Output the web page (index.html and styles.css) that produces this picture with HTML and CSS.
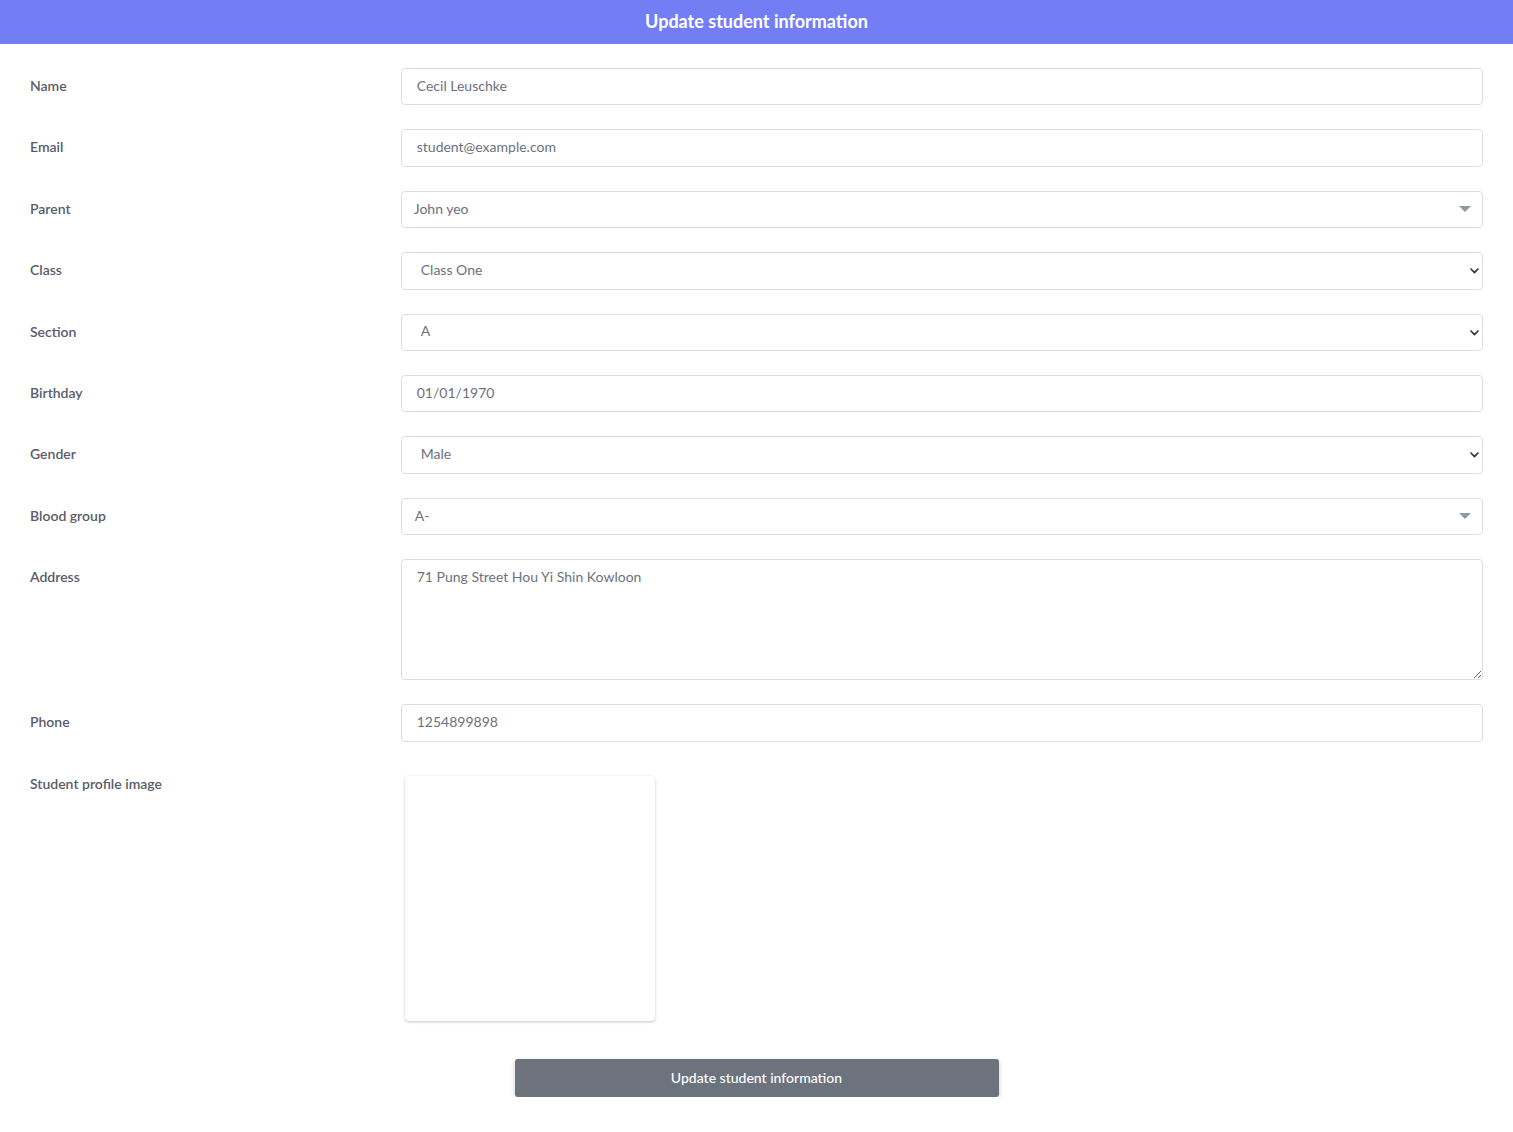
FILE: index.html
```html
<!DOCTYPE html>
<html lang="en">
<head>
<meta charset="utf-8">
<title>Update student information</title>
<link rel="stylesheet" href="styles.css">
</head>
<body>
<header class="topbar">Update student information</header>
<form class="form">
  <div class="row">
    <label class="lbl">Name</label>
    <div class="field"><input class="ctl" type="text" value="Cecil Leuschke"></div>
  </div>
  <div class="row">
    <label class="lbl">Email</label>
    <div class="field"><input class="ctl" type="text" value="student@example.com"></div>
  </div>
  <div class="row">
    <label class="lbl">Parent</label>
    <div class="field">
      <div class="s2"><span class="s2-text">John yeo</span><span class="s2-arrow"></span></div>
    </div>
  </div>
  <div class="row">
    <label class="lbl">Class</label>
    <div class="field sel-wrap">
      <select class="ctl sel"><option>Class One</option></select>
      <svg class="chev" width="9" height="6" viewBox="0 0 9 6"><path d="M1 1 L4.5 4.6 L8 1" fill="none" stroke="#343a40" stroke-width="1.7" stroke-linecap="round" stroke-linejoin="round"/></svg>
    </div>
  </div>
  <div class="row">
    <label class="lbl">Section</label>
    <div class="field sel-wrap">
      <select class="ctl sel"><option>A</option></select>
      <svg class="chev" width="9" height="6" viewBox="0 0 9 6"><path d="M1 1 L4.5 4.6 L8 1" fill="none" stroke="#343a40" stroke-width="1.7" stroke-linecap="round" stroke-linejoin="round"/></svg>
    </div>
  </div>
  <div class="row">
    <label class="lbl">Birthday</label>
    <div class="field"><input class="ctl" type="text" value="01/01/1970"></div>
  </div>
  <div class="row">
    <label class="lbl">Gender</label>
    <div class="field sel-wrap">
      <select class="ctl sel"><option>Male</option></select>
      <svg class="chev" width="9" height="6" viewBox="0 0 9 6"><path d="M1 1 L4.5 4.6 L8 1" fill="none" stroke="#343a40" stroke-width="1.7" stroke-linecap="round" stroke-linejoin="round"/></svg>
    </div>
  </div>
  <div class="row">
    <label class="lbl">Blood group</label>
    <div class="field">
      <div class="s2"><span class="s2-text s2-a">A-</span><span class="s2-arrow"></span></div>
    </div>
  </div>
  <div class="row">
    <label class="lbl">Address</label>
    <div class="field"><textarea class="ctl area">71 Pung Street Hou Yi Shin Kowloon</textarea></div>
  </div>
  <div class="row">
    <label class="lbl">Phone</label>
    <div class="field"><input class="ctl" type="text" value="1254899898"></div>
  </div>
  <div class="row">
    <label class="lbl">Student profile image</label>
    <div class="field"><div class="thumb"></div></div>
  </div>
  <div class="actions">
    <button type="button" class="btn">Update student information</button>
  </div>
</form>
</body>
</html>
```
FILE: styles.css
```css
* { box-sizing: border-box; }
html, body { margin: 0; padding: 0; background: #fff; }
body {
  font-family: Lato, "Noto Sans", "Liberation Sans", sans-serif;
  font-size: 14px;
  color: #5a5c69;
}
.topbar {
  height: 44px;
  background: #737ef5;
  color: #fff;
  font-weight: 700;
  font-size: 18px;
  line-height: 42px;
  text-align: center;
}
.form {
  padding: 24px 15px 0 15px;
}
.row {
  display: grid;
  grid-template-columns: 25% 75%;
  margin-bottom: 24px;
}
.lbl {
  padding: 8px 15px 0 15px;
  line-height: 20px;
  font-size: 14px;
  font-weight: 600;
  color: #5a5c69;
}
.field {
  padding: 0 15px;
}
.ctl {
  display: block;
  width: 100%;
  height: 37.4px;
  padding: 4px 15px 7px 15px;
  font-family: inherit;
  font-size: 14px;
  color: #6e707e;
  background: #fff;
  border: 1px solid #dcdde6;
  border-radius: 4px;
  outline: none;
}
.sel-wrap { position: relative; }
.sel {
  -webkit-appearance: none;
  appearance: none;
  padding-left: 19px;
}
.chev {
  position: absolute;
  right: 19px;
  top: 16px;
  pointer-events: none;
}
.s2 {
  height: 37.4px;
  border: 1px solid #dcdde6;
  border-radius: 4px;
  display: flex;
  align-items: center;
  justify-content: space-between;
  padding: 0 11px 1px 12px;
  color: #6e707e;
}
.s2-a { padding-left: 1px; }
.s2-arrow {
  width: 0;
  height: 0;
  border-left: 6px solid transparent;
  border-right: 6px solid transparent;
  border-top: 6px solid #8c9aa5;
}
.area {
  height: 121px;
  padding-top: 8px;
  line-height: 18px;
  resize: vertical;
}
.thumb {
  margin: 10px 0 0 4px;
  width: 250px;
  height: 245px;
  background: #fff;
  border-radius: 4px;
  box-shadow: 0 1px 3px rgba(0,0,0,0.22), 0 0 1px rgba(0,0,0,0.08);
}
.actions {
  display: flex;
  justify-content: center;
  padding: 14px 0 0 0;
}
.btn {
  width: 484px;
  height: 38px;
  background: #6c737d;
  color: #fff;
  border: none;
  border-radius: 3px;
  font-family: inherit;
  font-size: 14px;
  font-weight: 500;
  box-shadow: 0 2px 5px rgba(0,0,0,0.2);
}
```
